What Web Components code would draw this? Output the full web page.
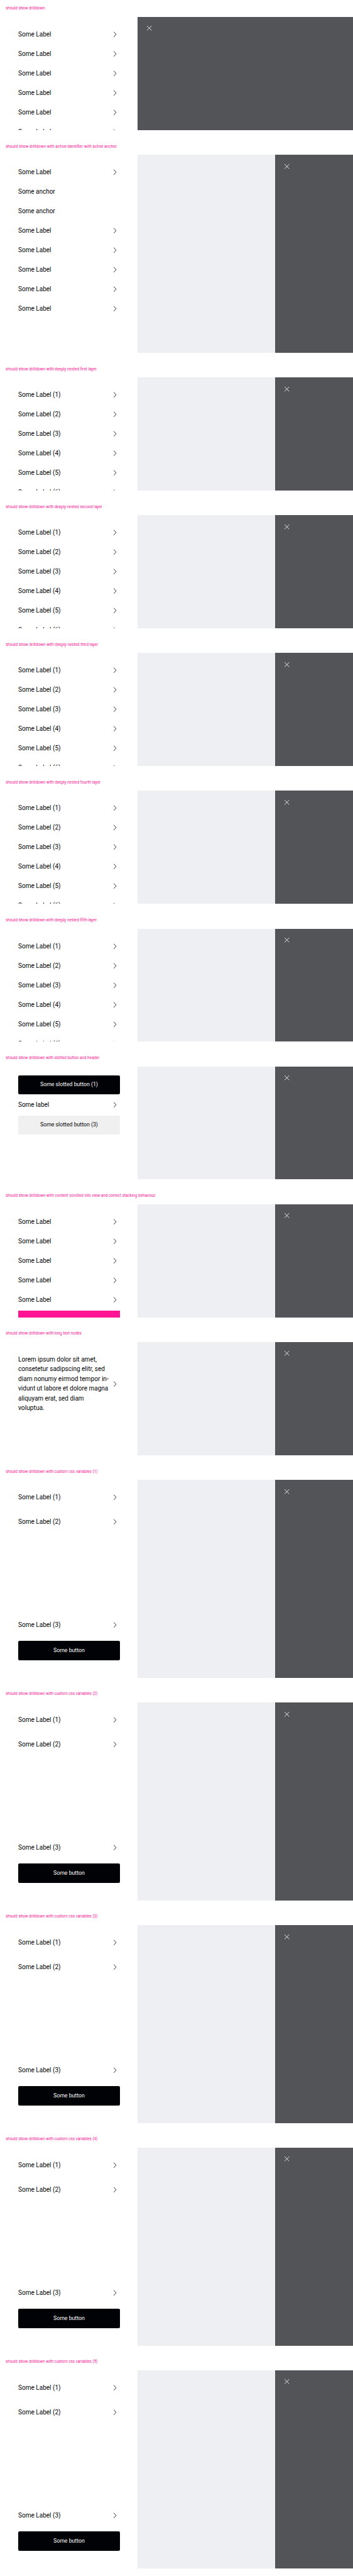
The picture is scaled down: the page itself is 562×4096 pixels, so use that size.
<!DOCTYPE html>
<html lang="en">
<head>
<meta charset="utf-8">
<title>Drilldown</title>
<style>
/* 1rem equals ten design pixels */
html { font-size: 5.6187px; }
body { margin: 0; background: #fff; color: #010205; font-family: Roboto, "Liberation Sans", sans-serif; overflow: hidden; }
</style>
</head>
<body>
<drill-page></drill-page>
<script>
const define = (name, html, setup) => {
  const t = document.createElement('template');
  t.innerHTML = html;
  customElements.define(name, class extends HTMLElement {
    constructor() {
      super();
      this.attachShadow({ mode: 'open' }).append(t.content.cloneNode(true));
    }
    connectedCallback() { if (setup) setup(this, this.shadowRoot); }
  });
};

/* One line of text condensed horizontally to the given advance width. */
define('fit-text', `<style>
  :host { display: block; white-space: nowrap; width: max-content; }
  span { display: inline-block; transform-origin: 0 50%; }
</style><span><slot></slot></span>`, (el, root) => {
  const span = root.querySelector('span');
  const natural = span.getBoundingClientRect().width;
  const target = el.getAttribute('w') * 0.562;
  if (natural) {
    span.style.transform = `translateY(var(--drop, 0.35px)) scaleX(${target / natural})`;
    el.style.width = target + 'px';
  }
});

define('drill-title', `<style>
  :host { display: flex; box-sizing: border-box; height: 4.8rem; padding: 1.5rem 0 0 1.6rem; color: #ff1493; font-size: 1.2rem; line-height: 1.8rem; --drop: 0.15px; }
</style><slot></slot>`);

define('drill-item', `<style>
  :host { display: flex; align-items: center; justify-content: space-between; flex: none; font-size: 1.98rem; line-height: 2.76rem; }
  div { flex: 1; min-width: 0; }
  svg { display: block; flex: none; width: 2.4rem; height: 2.4rem; margin-right: 0.2rem; fill: none; stroke: #010205; stroke-width: 1.5; }
  :host([plain]) svg { display: none; }
</style><div><slot></slot></div>
<svg viewBox="0 0 24 24"><path d="M9.2 4.8 15.7 12l-6.5 7.2"/></svg>`);

define('drill-button', `<style>
  :host { display: flex; align-items: center; justify-content: center; flex: none; height: 5.4rem; border-radius: 0.4rem; background: #010205; color: #fff; font-size: 1.6rem; line-height: 2.4rem; }
  :host([secondary]) { background: #f0f0f1; color: #010205; }
</style><slot></slot>`);

define('drill-panel', `<style>
  :host { display: grid; grid-template-columns: 39rem 39rem 1fr; height: 32rem; margin-bottom: 2.2rem; }
  :host([tall]) { height: 56rem; }
  :host([single]) { grid-template-columns: 39rem 1fr; }
  :host([single]) .second { display: none; }
  .list { display: flex; flex-direction: column; gap: 2.76rem; box-sizing: border-box; height: 100%; min-height: 0; padding: 3.56rem 5rem 0 5.1rem; overflow: hidden; }
  :host([slotted]) .list { padding-top: 2.5rem; gap: 1.62rem; }
  :host([spread]) .list { gap: 4.16rem; padding-bottom: 5rem; }
  .second { background: #eeeff2; }
  .backdrop { background: #535457; padding: 2.05rem; }
  svg { display: block; width: 2.4rem; height: 2.4rem; fill: none; stroke: #fff; stroke-width: 1.5; }
</style>
<div class="list"><slot></slot></div><div class="second"></div>
<div class="backdrop"><svg viewBox="0 0 24 24"><path d="M5.5 5.5l13 13M18.5 5.5l-13 13"/></svg></div>`);

define('drill-marker', `<style>
  :host { display: block; flex: none; height: 6rem; margin-top: -1.04rem; background: #ff1493; }
</style>`);

/* Bottom group of a tall menu: pushed to the lower edge. */
define('drill-footer', `<style>
  :host { display: flex; flex-direction: column; gap: 3.2rem; margin-top: auto; }
</style><slot></slot>`);

const item = (text, w, plain) => `<drill-item${plain ? ' plain' : ''}><fit-text w="${w}">${text}</fit-text></drill-item>`;
const label = n => n ? item(`Some Label (${n})`, 120.3) : item('Some Label', 93.5);
const title = (text, w) => `<drill-title><fit-text w="${w + 1}">${text}</fit-text></drill-title>`;
const panel = (attrs, body) => `<drill-panel ${attrs}>${body}</drill-panel>`;
const base = 'should show drilldown';

let html = title(base, 110.4) + panel('single', label().repeat(6));
html += title(base + ' with active-identifier with active anchor', 313.8) +
  panel('tall', label() + item('Some anchor', 104.5, true).repeat(2) + label().repeat(5));
for (const [n, w] of [['first', 256.7], ['second', 272.5], ['third', 260.7], ['fourth', 267.7], ['fifth', 256.7]])
  html += title(`${base} with deeply nested ${n} layer`, w) + panel('', [1, 2, 3, 4, 5, 6].map(label).join(''));
html += title(base + ' with slotted button and header', 264.7) + panel('slotted',
  '<drill-button><fit-text w="163.5">Some slotted button (1)</fit-text></drill-button>' +
  item('Some label', 87.5) +
  '<drill-button secondary><fit-text w="163.5">Some slotted button (3)</fit-text></drill-button>');
html += title(base + ' with content scrolled into view and correct stacking behaviour', 423.7) +
  panel('', label().repeat(5) + '<drill-marker></drill-marker>');
html += title(base + ' with long text nodes', 214) + panel('', '<drill-item>' + [
  ['Lorem ipsum dolor sit amet,', 222.5], ['consetetur sadipscing elitr, sed', 245.3],
  ['diam nonumy eirmod tempor in-', 255.8], ['vidunt ut labore et dolore magna', 254.8],
  ['aliquyam erat, sed diam', 186], ['voluptua.', 74.3]
].map(([t, w]) => `<fit-text w="${w}">${t}</fit-text>`).join('') + '</drill-item>');
for (let n = 1; n < 6; n++)
  html += title(`${base} with custom css variables (${n})`, 259.3) + panel('tall spread',
    label(1) + label(2) + '<drill-footer>' + label(3) +
    '<drill-button><fit-text w="88.6">Some button</fit-text></drill-button></drill-footer>');

define('drill-page', `<style>:host { display: block; }</style>${html}`);
</script>
</body>
</html>
